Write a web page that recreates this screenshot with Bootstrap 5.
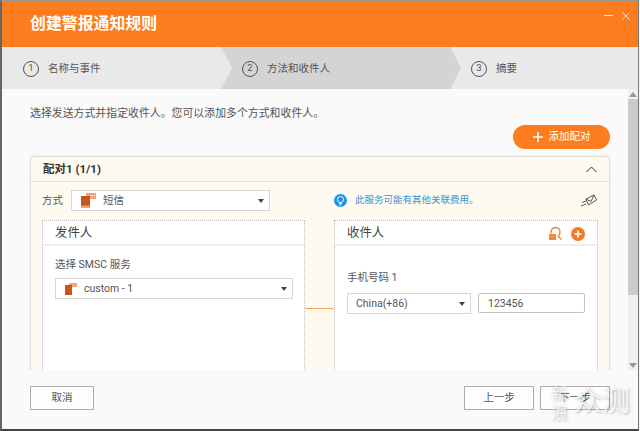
<!DOCTYPE html>
<html lang="zh">
<head>
<meta charset="utf-8">
<title>创建警报通知规则</title>
<link href="https://cdn.jsdelivr.net/npm/bootstrap@5.3.0/dist/css/bootstrap.min.css" rel="stylesheet">
<style>
html,body{margin:0;height:431px;overflow:hidden;background:#f4f4f4}
body{font-family:Roboto,"Noto Sans CJK SC",sans-serif;font-size:10.5px;color:#555;line-height:1.3;position:relative}
.win{height:431px;margin-right:1px;border-left:2px solid #666;border-right:1px solid #777;border-top:1px solid #999;border-bottom:2px solid #444;background:#fafafa}
.head{height:46px;background:#fd7d1e;color:#fff;padding:1px 8px 0 28px;flex:none}
.head-title{font-size:15.9px;font-weight:700}
.head-ctl{gap:9px;margin-top:-18px}
.steps{height:42px;background:#e9e9e9;flex:none}
.stp{padding:1px 0 0 21px;gap:9px;height:100%;position:relative;flex:none}
.stp1{width:219px}
.stp2{width:229px;background:#d4d4d4}
.stp2::after,.stp1::after{content:"";position:absolute;top:0;right:-11px;width:11px;height:100%;z-index:2}
.stp1::after{background:#e9e9e9;clip-path:polygon(0 0,100% 50%,0 100%)}
.stp2::after{background:#d4d4d4;clip-path:polygon(0 0,100% 50%,0 100%)}
.num{width:16px;height:16px;border:1px solid #555;border-radius:50%;font-size:9.5px;flex:none}
.main{height:281px;overflow:hidden;flex:none}
.scroller{flex:1;min-width:0;overflow:hidden;padding:0 18px 0 28px}
.intro{font-size:10.9px;margin:17px 0 0;line-height:16px;white-space:nowrap}
.addrow{margin-top:3px;height:24px}
.addbtn{width:97px;height:24px;border-radius:12px;background:#fd7d1e;border:0;color:#fff;font-size:10.5px;padding:0;gap:6px}
.pair{margin-top:7px;background:#fefaf0;border:1px solid #dfdfd8;border-radius:4px 4px 0 0;box-shadow:0 0 2px rgba(0,0,0,.12)}
.pair-h{height:25px;border-bottom:1px solid #e2e2dc;padding:0 12px;font-weight:700;font-size:11.5px;color:#333}
.pair-b{padding:8px 11px 0}
.rowa{height:21px;gap:8px}
.sel{background:#fff;border:1px solid #d6d6d6;height:21px;position:relative;color:#555}
.sel::after{content:"";position:absolute;right:5px;top:8px;border-left:3.5px solid transparent;border-right:3.5px solid transparent;border-top:4px solid #444}
.sel-m{width:199px;padding-left:9px;gap:7px}
.note{margin-left:56px;gap:8px;color:#3b94d2;font-size:9.5px;white-space:nowrap}
.env{margin-left:auto;margin-right:1px}
.panels{margin-top:9px;align-items:flex-start}
.pan{background:#fff;border:1px dotted #bbb;height:170px;flex:none}
.pan-l{width:263px}
.pan-r{width:264px}
.pan-h{height:25px;border-bottom:2px solid #eee;padding:2px 12px 0;font-size:12.4px;color:#444}
.conn{width:29px;height:1px;background:#f9a45c;margin-top:88px;flex:none}
.lbl{margin:12px 0 7px 12px;line-height:13px}
.sel-s{margin-left:12px;width:238px;padding-left:9px;gap:7px}
.lbl2{margin:25px 0 9px 12px;line-height:13px}
.sel-c{width:124px;padding-left:8px}
.inp{width:107px;height:20px;border:1px solid #c4c4c4;border-radius:2px;padding:0 9px;color:#555;font-size:10.5px;background:#fff;outline:0}
.twin{padding:0 12px;gap:7px}
.sb{width:10px;background:#f0f0f0;flex:none}
.sb-u,.sb-d{height:10px;font-size:0}
.tri-u{border-left:4px solid transparent;border-right:4px solid transparent;border-bottom:5px solid #999}
.tri-d{border-left:4px solid transparent;border-right:4px solid transparent;border-top:5px solid #999}
.sb-t{height:196px;background:#cbcbcb}
.foot{height:59px;padding:16px 28px 0 28px;background:#fafafa;flex:none}
.foot-r{gap:6px}
.bt{height:24px;border:1px solid #adadad;border-radius:0;background:#fdfdfd;color:#555;font-size:10.5px;padding:0;line-height:22px}
.bt-c{width:64px}
.bt-n{width:70px}
.mk{position:absolute;left:551px;top:383px;color:rgba(255,255,255,.9);text-shadow:1px 1px 3px rgba(0,0,0,.4);pointer-events:none;gap:5px;font-family:"Noto Sans CJK SC",sans-serif}
.mk-a{font-size:17px;line-height:19px;width:18px;font-weight:300}
.mk-b{font-size:28px;line-height:32px;font-weight:300;white-space:nowrap}
</style>
</head>
<body>
<div class="win d-flex flex-column">
  <div class="head d-flex align-items-center justify-content-between">
    <div class="head-title">创建警报通知规则</div>
    <div class="head-ctl d-flex align-items-center">
      <svg width="9" height="9" viewBox="0 0 9 9"><path d="M0 4.500h9" stroke="#ffe3cc" stroke-width="1"/></svg>
      <svg width="8" height="8" viewBox="0 0 8 8"><path d="M.5.500l7 7M7.500.500l-7 7" stroke="#ffe3cc" stroke-width="1"/></svg>
    </div>
  </div>
  <div class="steps d-flex">
    <div class="stp stp1 d-flex align-items-center"><span class="num d-flex align-items-center justify-content-center">1</span><span>名称与事件</span></div>
    <div class="stp stp2 d-flex align-items-center"><span class="num d-flex align-items-center justify-content-center">2</span><span>方法和收件人</span></div>
    <div class="stp d-flex align-items-center"><span class="num d-flex align-items-center justify-content-center">3</span><span>摘要</span></div>
  </div>
  <div class="main d-flex">
    <div class="scroller">
      <p class="intro">选择发送方式并指定收件人。您可以添加多个方式和收件人。</p>
      <div class="addrow d-flex justify-content-end">
        <button class="btn addbtn d-flex align-items-center justify-content-center" type="button">
          <svg width="10" height="10" viewBox="0 0 10 10"><path d="M5 0v10M0 5h10" stroke="#fff" stroke-width="1.500"/></svg>
          <span>添加配对</span>
        </button>
      </div>
      <div class="pair">
        <div class="pair-h d-flex align-items-center justify-content-between">
          <span>配对1 (1/1)</span>
          <svg width="11" height="7" viewBox="0 0 11 7"><path d="M.5 6L5.500 1l5 5" fill="none" stroke="#333" stroke-width="1"/></svg>
        </div>
        <div class="pair-b">
          <div class="rowa d-flex align-items-center">
            <span>方式</span>
            <div class="sel sel-m d-flex align-items-center">
              <svg width="15" height="15" viewBox="0 0 15 15"><rect x="5" y="0" width="10" height="6" fill="#f5a27c"/><path d="M0 3h9v12H2l-2-1z" fill="#c9551b"/><path d="M0 12.500h9V15H2l-2-1z" fill="#f0a070"/><path d="M9 2.500h1M11 2.500h1M13 2.500h1" stroke="#fff"/></svg>
              <span>短信</span>
            </div>
            <div class="note d-flex align-items-center">
              <svg width="13" height="13" viewBox="0 0 13 13"><circle cx="6.500" cy="6.500" r="6.500" fill="#1c93e4"/><circle cx="6.500" cy="5.500" r="3" fill="none" stroke="#fff"/><path d="M5 9.500h3M5.500 11h2" stroke="#fff"/></svg>
              <span>此服务可能有其他关联费用。</span>
            </div>
            <svg class="env" width="16" height="13" viewBox="0 0 16 13"><path d="M5 5L13 1l2.500 5-8 5z" fill="none" stroke="#555" stroke-width="1"/><path d="M5 5l5 2.500L13 1" fill="none" stroke="#555" stroke-width="1"/><path d="M1 8.500l4-1.500M0 12l5-2" stroke="#555" stroke-width="1"/></svg>
          </div>
          <div class="panels d-flex">
            <div class="pan pan-l">
              <div class="pan-h d-flex align-items-center">发件人</div>
              <div class="lbl">选择 SMSC 服务</div>
              <div class="sel sel-s d-flex align-items-center">
                <svg width="12" height="12" viewBox="0 0 12 12"><rect x="4" y="0" width="8" height="4" fill="#f5a27c"/><path d="M0 2h7v10H0z" fill="#c9551b"/></svg>
                <span>custom - 1</span>
              </div>
            </div>
            <div class="conn"></div>
            <div class="pan pan-r">
              <div class="pan-h d-flex align-items-center justify-content-between">
                <span>收件人</span>
                <span class="d-flex align-items-center gap-2">
                  <svg width="14" height="14" viewBox="0 0 14 14"><path d="M2 6.500V5a4.500 4.500 0 0 1 9 0c0 1.500-.5 3-1.500 4M9 9l3.500 3.500" fill="none" stroke="#f07a25" stroke-width="1.300"/><rect x="0" y="7" width="7" height="6" fill="#f08a45"/></svg>
                  <svg width="14" height="14" viewBox="0 0 14 14"><circle cx="7" cy="7" r="7" fill="#f07a25"/><path d="M7 3.500v7M3.500 7h7" stroke="#fff" stroke-width="1.600"/></svg>
                </span>
              </div>
              <div class="lbl2">手机号码 1</div>
              <div class="twin d-flex">
                <div class="sel sel-c d-flex align-items-center">China(+86)</div>
                <input class="inp" type="text" value="123456">
              </div>
            </div>
          </div>
        </div>
      </div>
    </div>
    <div class="sb d-flex flex-column">
      <div class="sb-u d-flex align-items-center justify-content-center"><span class="tri-u"></span></div>
      <div class="sb-t"></div>
      <div class="flex-grow-1"></div>
      <div class="sb-d d-flex align-items-center justify-content-center"><span class="tri-d"></span></div>
    </div>
  </div>
  <div class="foot d-flex justify-content-between">
    <button class="btn bt bt-c" type="button">取消</button>
    <div class="d-flex foot-r">
      <button class="btn bt bt-n" type="button">上一步</button>
      <button class="btn bt bt-n" type="button">下一步</button>
    </div>
  </div>
</div>
<div class="mk d-flex">
  <div class="mk-a">新浪</div>
  <div class="mk-b">众测</div>
</div>
<script src="https://cdn.jsdelivr.net/npm/bootstrap@5.3.0/dist/js/bootstrap.bundle.min.js"></script>
</body>
</html>
